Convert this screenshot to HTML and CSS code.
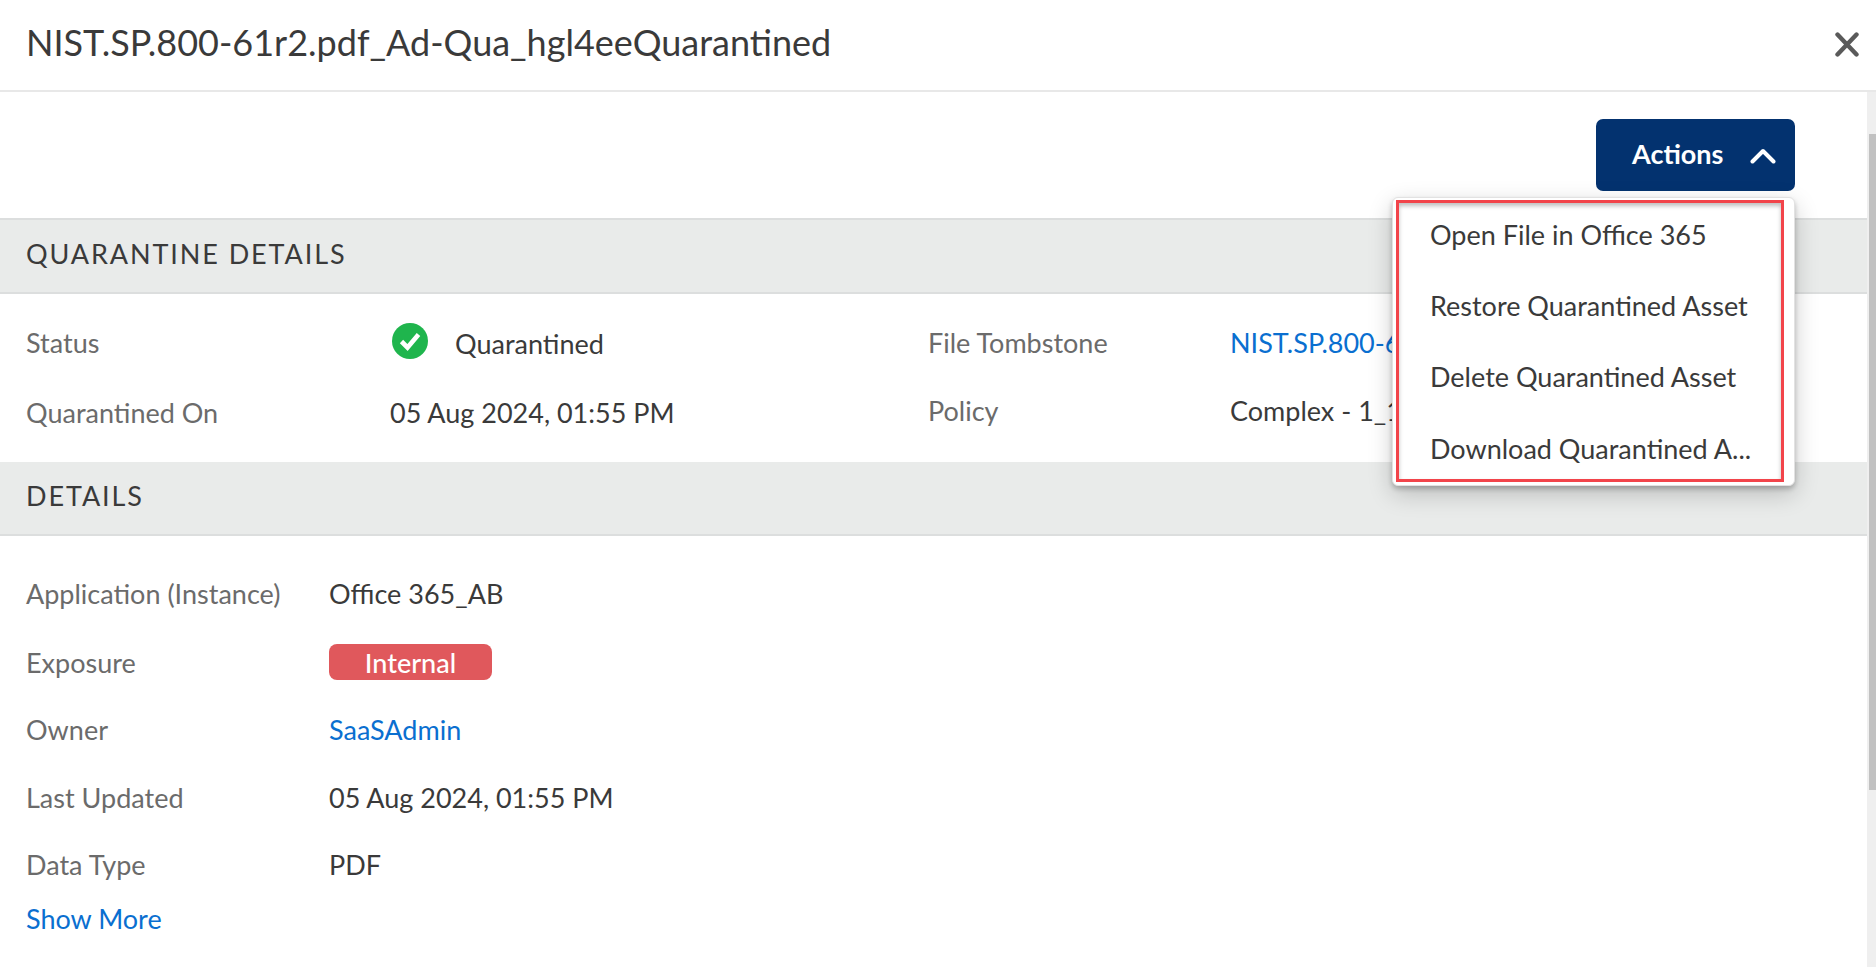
FILE: index.html
```html
<!DOCTYPE html>
<html lang="en">
<head>
  <meta charset="UTF-8" />
  <meta name="viewport" content="width=device-width, initial-scale=1.0" />
  <title>Quarantine Details</title>
  <link rel="stylesheet" href="styles.css">
</head>
<body>
  <header class="header">
    <h1>NIST.SP.800-61r2.pdf_Ad-Qua_hgl4eeQuarantined</h1>
    <svg class="close" viewBox="0 0 24 25" width="24" height="25" aria-label="Close">
      <path d="M2.5 2.5 L21.5 22.5 M21.5 2.5 L2.5 22.5" fill="none" stroke="#5a5a5a" stroke-width="4.4" stroke-linecap="round"/>
    </svg>
  </header>

  <div class="main">
    <div class="content">
      <div class="toolbar">
        <button class="actions">
          <span>Actions</span>
          <svg viewBox="0 0 26 16" width="26" height="16">
            <path d="M2.5 13.5 L13 3 L23.5 13.5" fill="none" stroke="#ffffff" stroke-width="4" stroke-linecap="round" stroke-linejoin="round"/>
          </svg>
        </button>
        <div class="menu">
          <ul class="menu-list">
            <li>Open File in Office 365</li>
            <li>Restore Quarantined Asset</li>
            <li>Delete Quarantined Asset</li>
            <li>Download Quarantined A...</li>
          </ul>
        </div>
      </div>

      <h2 class="section section-first">QUARANTINE DETAILS</h2>
      <div class="quarantine">
        <div class="q-row">
          <span class="label q-label">Status</span>
          <span class="q-status">
            <svg viewBox="0 0 36 36" width="36" height="36">
              <circle cx="18" cy="18" r="18" fill="#1fb54d"/>
              <path d="M9.5 18.5 L15.5 24.5 L26.5 11.5" fill="none" stroke="#ffffff" stroke-width="4.6"/>
            </svg>
            <span class="value">Quarantined</span>
          </span>
          <span class="label q-label-right">File Tombstone</span>
          <a class="link">NIST.SP.800-61r2.pdf</a>
        </div>
        <div class="q-row q-row-second">
          <span class="label q-label">Quarantined On</span>
          <span class="value q-value">05 Aug 2024, 01:55 PM</span>
          <span class="label q-label-right q-policy">Policy</span>
          <span class="value q-policy">Complex - 1_1</span>
        </div>
      </div>

      <h2 class="section">DETAILS</h2>
      <div class="details">
        <div class="d-row"><span class="label d-label">Application (Instance)</span><span class="value">Office 365_AB</span></div>
        <div class="d-row"><span class="label d-label">Exposure</span><span class="badge">Internal</span></div>
        <div class="d-row"><span class="label d-label">Owner</span><a class="link">SaaSAdmin</a></div>
        <div class="d-row"><span class="label d-label">Last Updated</span><span class="value">05 Aug 2024, 01:55 PM</span></div>
        <div class="d-row"><span class="label d-label">Data Type</span><span class="value">PDF</span></div>
        <a class="link show-more">Show More</a>
      </div>
    </div>

    <div class="scrollbar"><div class="thumb"></div></div>
  </div>
</body>
</html>
```

FILE: styles.css
```css
* {
  box-sizing: border-box;
}

body {
  margin: 0;
  height: 100vh;
  overflow: hidden;
  display: flex;
  flex-direction: column;
  background: #ffffff;
  color: #3a3a3a;
  font-family: 'Lato', sans-serif;
  font-size: 27px;
}

.header {
  height: 92px;
  flex-shrink: 0;
  display: flex;
  align-items: center;
  justify-content: space-between;
  padding: 0 17px 2px 26px;
  border-bottom: 2px solid #e8e8e8;
}

h1 {
  margin: 0 0 4px;
  font-size: 36px;
  font-weight: 400;
  color: #3a3a3a;
}

.main {
  flex: 1;
  display: flex;
  min-height: 0;
}

.content {
  flex: 1;
  min-width: 0;
}

.toolbar {
  position: relative;
  height: 126px;
  padding: 27px 72px 0 0;
  display: flex;
  justify-content: flex-end;
  align-items: flex-start;
}

.actions {
  width: 199px;
  height: 72px;
  display: flex;
  align-items: center;
  gap: 27px;
  padding: 0 0 3px 36px;
  background: #03326f;
  color: #ffffff;
  border: none;
  border-radius: 7px;
  font-family: inherit;
  font-size: 27px;
  font-weight: 700;
}

.actions svg {
  margin-top: 5px;
}

.menu {
  position: absolute;
  top: 105px;
  left: 1392px;
  width: 403px;
  height: 289px;
  padding: 2px 10px 3px 3px;
  background: #ffffff;
  border: 1px solid #e2e2e2;
  border-radius: 6px;
  box-shadow: 0 8px 24px rgba(0, 0, 0, 0.2), 0 3px 5px rgba(0, 0, 0, 0.22);
  z-index: 5;
}

.menu-list {
  list-style: none;
  margin: 0;
  padding: 0;
  height: 100%;
  border: 3px solid #f2444a;
  box-shadow: inset 0 3px 4px rgba(0, 0, 0, 0.25);
}

.menu-list li {
  height: 71.3px;
  padding: 0 0 9px 31px;
  display: flex;
  align-items: center;
  white-space: nowrap;
}

.section {
  margin: 0;
  height: 74px;
  display: flex;
  align-items: center;
  padding: 0 0 6px 26px;
  background: #e9ebea;
  border-bottom: 2px solid #dcdede;
  font-size: 27px;
  font-weight: 400;
  letter-spacing: 1.9px;
  color: #3a3a3a;
}

.section-first {
  height: 76px;
  border-top: 2px solid #dcdede;
}

.quarantine {
  height: 168px;
  padding: 13px 0 0 26px;
}

.q-row {
  height: 70px;
  display: flex;
  align-items: center;
  white-space: nowrap;
}

.label {
  color: #6b6b6b;
}

.value {
  color: #3a3a3a;
}

.link {
  color: #0a6fd0;
}

.q-label {
  width: 364px;
}

.q-status {
  width: 538px;
  display: flex;
  align-items: center;
  gap: 27px;
  padding-left: 2px;
}

.q-status svg {
  margin-bottom: 2px;
}

.q-status .value {
  padding-top: 3px;
}

.q-value {
  width: 538px;
}

.q-label-right {
  width: 302px;
}

.q-policy {
  margin-top: -3px;
}

.details {
  padding: 24px 0 0 26px;
}

.d-row {
  height: 67.5px;
  display: flex;
  align-items: center;
}

.d-label {
  width: 303px;
}

.badge {
  width: 163px;
  height: 36px;
  display: flex;
  align-items: center;
  justify-content: center;
  background: #e0585c;
  color: #ffffff;
  border-radius: 8px;
  font-weight: 500;
}

.d-row:nth-child(2) {
  margin-top: 1px;
}

.show-more {
  display: block;
  margin-top: 3px;
}

.scrollbar {
  width: 9px;
  flex-shrink: 0;
  background: #efefef;
  padding: 42px 0 0 2px;
}

.thumb {
  height: 656px;
  background: #c1c1c1;
}
```
